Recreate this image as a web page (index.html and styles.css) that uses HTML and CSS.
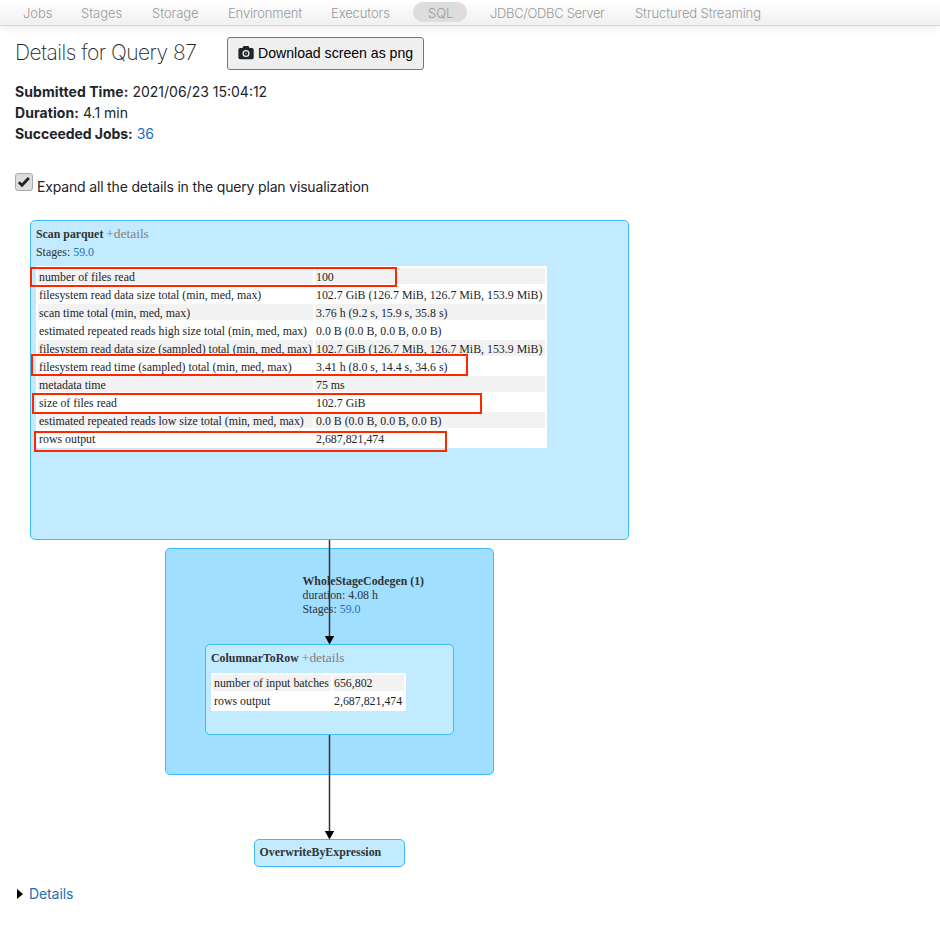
FILE: index.html
```html
<!DOCTYPE html>
<html lang="en">
<head>
<meta charset="utf-8">
<title>Details for Query 87</title>
<link rel="stylesheet" href="styles.css">
</head>
<body>
<nav class="navbar">
  <a class="nav-item t-jobs">Jobs</a><a class="nav-item t-stages">Stages</a><a class="nav-item t-storage">Storage</a><a class="nav-item t-env">Environment</a><a class="nav-item t-exec">Executors</a><a class="nav-item active t-sql">SQL</a><a class="nav-item t-jdbc">JDBC/ODBC Server</a><a class="nav-item t-stream">Structured Streaming</a>
</nav>
<main>
  <header class="heading">
    <h3><span>Details for Query 87</span></h3>
    <button class="download" type="button">
      <svg width="16" height="14" viewBox="0 0 16 14"><path fill="#212529" d="M5.200.4Q5.400 0 6 0h4q.6 0 .8.4L11.600 2H14q1.700 0 1.700 1.700v7.800q0 1.700-1.700 1.700H2Q.4 13.200.4 11.500V3.700Q.4 2 2 2h2.400z"/><circle cx="8" cy="7.500" r="2.900" fill="none" stroke="#efefef" stroke-width="1.300"/><circle cx="8" cy="7.500" r="1" fill="#777"/></svg>
      <span>Download screen as png</span>
    </button>
  </header>
  <ul class="summary">
    <li><strong>Submitted Time:</strong> <span>2021/06/23 15:04:12</span></li>
    <li><strong>Duration:</strong> <span>4.1 min</span></li>
    <li><strong class="jobs">Succeeded Jobs:</strong> <a>36</a></li>
  </ul>
  <div class="expand">
    <span class="check"><svg width="14" height="12" viewBox="0 0 14 12"><path fill="none" stroke="#222" stroke-width="2.800" d="M1.800 6.300L5 9.200L11.800 2"/></svg></span>
    <label>Expand all the details in the query plan visualization</label>
  </div>
  <section class="graph">
    <div class="node scan">
      <p class="title"><b>Scan parquet</b> <i>+details</i></p>
      <p class="stages">Stages: <a>59.0</a></p>
      <table class="metrics">
        <tr><td>number of files read</td><td>100</td></tr>
        <tr><td>filesystem read data size total (min, med, max)</td><td>102.7 GiB (126.7 MiB, 126.7 MiB, 153.9 MiB)</td></tr>
        <tr><td>scan time total (min, med, max)</td><td>3.76 h (9.2 s, 15.9 s, 35.8 s)</td></tr>
        <tr><td>estimated repeated reads high size total (min, med, max)</td><td>0.0 B (0.0 B, 0.0 B, 0.0 B)</td></tr>
        <tr><td>filesystem read data size (sampled) total (min, med, max)</td><td>102.7 GiB (126.7 MiB, 126.7 MiB, 153.9 MiB)</td></tr>
        <tr><td>filesystem read time (sampled) total (min, med, max)</td><td>3.41 h (8.0 s, 14.4 s, 34.6 s)</td></tr>
        <tr><td>metadata time</td><td>75 ms</td></tr>
        <tr><td>size of files read</td><td>102.7 GiB</td></tr>
        <tr><td>estimated repeated reads low size total (min, med, max)</td><td>0.0 B (0.0 B, 0.0 B, 0.0 B)</td></tr>
        <tr><td>rows output</td><td>2,687,821,474</td></tr>
      </table>
    </div>
    <div class="cluster">
      <p><b>WholeStageCodegen (1)</b><br>duration: 4.08 h<br>Stages: <a>59.0</a></p>
    </div>
    <div class="node columnar">
      <p class="title"><b>ColumnarToRow</b> <i>+details</i></p>
      <table class="metrics">
        <tr><td>number of input batches</td><td>656,802</td></tr>
        <tr><td>rows output</td><td>2,687,821,474</td></tr>
      </table>
    </div>
    <div class="node overwrite"><p class="title"><b>OverwriteByExpression</b></p></div>
    <svg class="edges" width="640" height="660" viewBox="0 0 640 660">
      <path stroke="#333" stroke-width="1.500" d="M314.500 320V420M314.500 515V615"/>
      <path d="M309.800 416h9.400l-4.700 8.500zM309.800 611h9.400l-4.700 8.500z"/>
    </svg>
    <span class="mark m1"></span><span class="mark m2"></span><span class="mark m3"></span><span class="mark m4"></span>
  </section>
  <div class="details"><span class="arrow"></span><a>Details</a></div>
</main>
</body>
</html>
```
FILE: styles.css
```css
* { box-sizing: border-box; }
body { margin: 0; background: #fff; color: #212529; font: 14px/21px Inter, "Liberation Sans", sans-serif; }
p, h3, ul { margin: 0; padding: 0; }
a { color: #1f6fb8; text-decoration: none; }
i { font-style: normal; }
.navbar { display: flex; height: 26px; padding: 2px 0 0 8px; background: linear-gradient(#fff, #f0f0f0); border-bottom: 1px solid #d9d9d9; box-shadow: 0 1px 10px rgba(0,0,0,.1); }
.nav-item { height: 20px; margin-right: 3px; padding: 0 0 0 15px; border-radius: 10px; color: #999; font-size: 13px; font-weight: 300; line-height: 23px; white-space: nowrap; letter-spacing: -.05px; }
.active { background: #ddd; }
.t-jobs { width: 55px; }
.t-stages { width: 68px; }
.t-storage { width: 73px; }
.t-env { width: 100px; letter-spacing: -.15px; }
.t-exec { width: 94px; letter-spacing: -.1px; }
.t-sql { width: 54px; }
.t-jdbc { width: 146px; margin-left: 3px; padding-left: 17px; margin-right: 0; letter-spacing: -.33px; }
.t-stream { padding-left: 16px; letter-spacing: -.1px; }
main { padding: 0 15px; }
.heading { display: flex; align-items: flex-start; height: 55px; padding-top: 11px; }
h3 { width: 212px; font-size: 21px; line-height: 32px; font-weight: 200; white-space: nowrap; letter-spacing: -.5px; }
.download { display: flex; align-items: center; gap: 4px; width: 197px; height: 33px; padding: 0 0 2px 10px; border: 1px solid #767676; border-radius: 3px; background: #efefef; color: #000; font: 14.100px "Liberation Sans", sans-serif; white-space: nowrap; }
.summary { height: 91px; list-style: none; }
.summary strong { font-weight: 700; letter-spacing: .08px; }
.summary .jobs { letter-spacing: -.05px; }
.summary a { letter-spacing: -.1px; }
.expand { display: flex; gap: 4px; height: 48px; }
.expand label { padding-top: 4px; white-space: nowrap; letter-spacing: -.17px; }
.check { display: flex; align-items: center; justify-content: center; width: 18px; height: 18px; margin-top: 1px; border: 1px solid #aaa; border-radius: 3px; background: #ddd; }
.graph { position: relative; height: 663px; color: #333; font: 11.870px/14px "Liberation Serif", serif; }
.node, .cluster { position: absolute; border: 1px solid #3ebbf8; border-radius: 5px; background: #c3ebff; white-space: nowrap; }
.node { padding: 4px 0 0 5px; }
.title { line-height: 18px; height: 18px; }
.title i { color: #808080; font-size: 13.400px; }
.stages { line-height: 18px; height: 18px; }
.scan { left: 15px; top: 0; width: 599px; height: 320px; }
.cluster { left: 150px; top: 328px; width: 329px; height: 227px; padding: 25px 0 0 136.500px; background: #a0dfff; }
.columnar { left: 190px; top: 424px; width: 249px; height: 91px; }
.overwrite { left: 239px; top: 619px; width: 151px; height: 28px; padding: 3px 0 0 4.500px; }
.metrics { table-layout: fixed; width: 511px; margin-top: 5px; border-collapse: separate; border-spacing: 2px; background: #fff; color: #212529; }
.metrics td { height: 16px; padding: 2px 1px 0; line-height: 14px; }
.metrics td:first-child { width: 275px; }
.metrics tr:nth-child(odd) td { background: #f2f2f2; }
.columnar .metrics { width: 195px; margin-top: 6px; }
.columnar .metrics td { padding: 1px; }
.columnar .metrics td:first-child { width: 118px; }
.edges { position: absolute; left: 0; top: 0; }
.mark { position: absolute; border: 2px solid #ff2600; }
.m1 { left: 15px; top: 47px; width: 367px; height: 20px; }
.m2 { left: 16px; top: 134px; width: 437px; height: 22px; }
.m3 { left: 17px; top: 173px; width: 450px; height: 21px; }
.m4 { left: 19px; top: 211px; width: 413px; height: 21px; }
.details { display: flex; align-items: center; gap: 6px; padding-left: 2px; letter-spacing: -.1px; }
.arrow { border-left: 6px solid #000; border-top: 5px solid transparent; border-bottom: 5px solid transparent; }
```
